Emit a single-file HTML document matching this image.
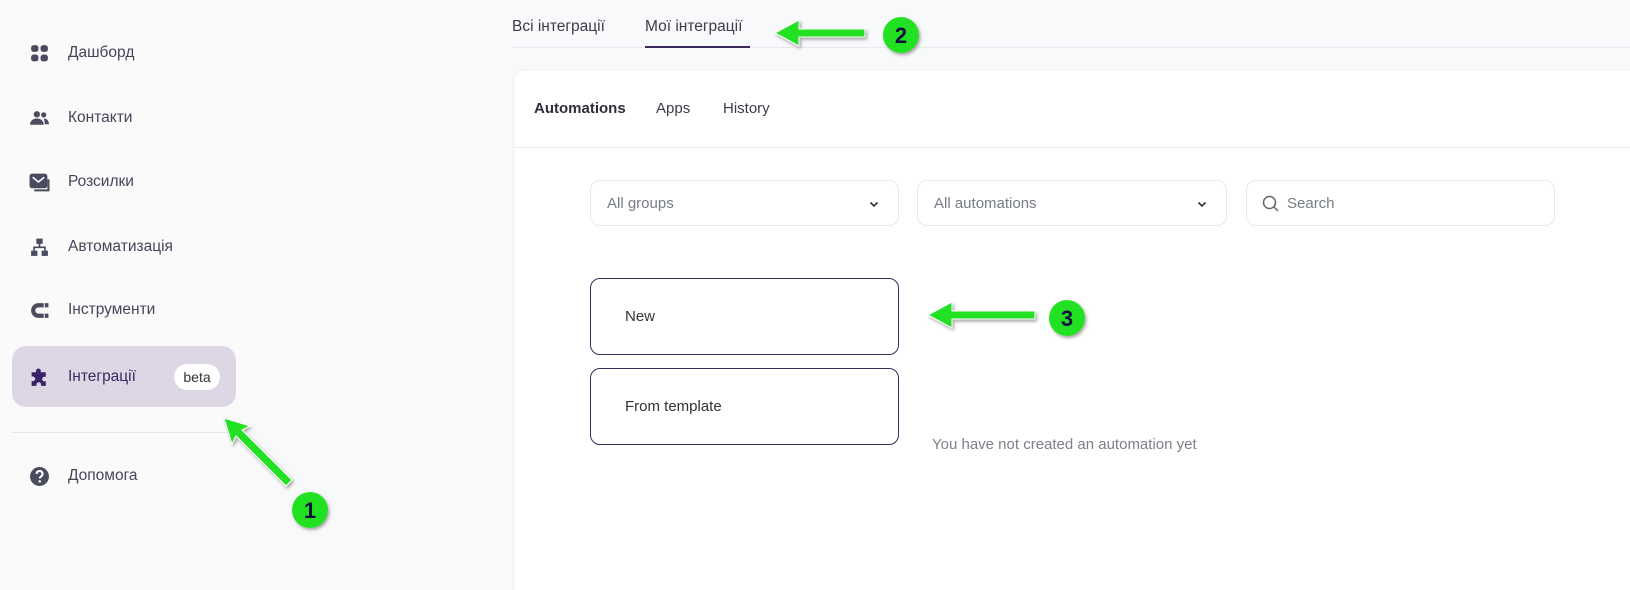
<!DOCTYPE html>
<html><head><meta charset="utf-8"><style>
*{margin:0;padding:0;box-sizing:border-box}
html,body{width:1630px;height:590px;overflow:hidden}
body{background:#f8f9fb;font-family:"Liberation Sans",sans-serif;position:relative;color:#3d3d4e}
.sb{position:absolute;left:0;top:0;width:252px;height:590px;background:#fafafa}
.it{position:absolute;left:0;width:252px;height:30px;display:flex;align-items:center;font-size:15.5px;color:#44455a}
.it svg{position:absolute;left:29px;width:21px;height:21px}
.it span{position:absolute;left:68px}
.hl{position:absolute;left:12px;top:346px;width:224px;height:61px;background:#ddd6e4;border-radius:14px}
.beta{position:absolute;left:174px;top:364px;width:46px;height:26px;background:#fff;border-radius:13px;font-size:14px;text-align:center;line-height:26px;color:#333}
.div{position:absolute;left:12px;top:432px;width:224px;height:1px;background:#e6e6ea}
.t{position:absolute;font-size:15.5px;color:#3b3b4a}
.card{position:absolute;left:513px;top:69px;width:1117px;height:521px;background:#fff;border:1px solid #eceef2;border-bottom:none;border-right:none;border-radius:12px 0 0 0}
.hdr{position:absolute;left:513px;top:147px;width:1117px;height:1px;background:#eceef2}
.dd{position:absolute;top:180px;height:46px;border:1px solid #e6e8ec;border-radius:10px;background:#fff;font-size:15px;color:#777b84}
.dd span{position:absolute;left:16px;top:14px}
.btn{position:absolute;left:590px;width:309px;height:77px;border:1.3px solid #3c2a5c;border-radius:10px;background:#fff;font-size:15px;color:#333}
.btn span{position:absolute;left:34px;top:29px}
</style></head><body>
<div class="sb"></div>
<div class="hl"></div>
<div class="it" style="top:38px"><svg viewBox="0 0 20 20" fill="#4a4b5e"><rect x="2" y="2" width="7" height="6.5" rx="2.5"/><rect x="11" y="2" width="7" height="6.5" rx="2.5"/><rect x="2" y="11" width="7" height="6.5" rx="2.5"/><rect x="11" y="11" width="7" height="6.5" rx="2.5"/></svg><span>Дашборд</span></div>
<div class="it" style="top:103px"><svg viewBox="0 0 20 20" fill="#4a4b5e"><circle cx="7.5" cy="6" r="3"/><circle cx="14" cy="6.5" r="2.5"/><path d="M1 16c0-4 3-6 6.5-6s6.5 2 6.5 6z"/><path d="M14 10c3 0 5 2 5 5.5h-4c0-2-.5-4-1-5.5z"/></svg><span>Контакти</span></div>
<div class="it" style="top:167px"><svg viewBox="0 0 20 20" fill="none" stroke="#4a4b5e" stroke-width="2"><rect x="1.5" y="2.5" width="15" height="12" rx="1.5" fill="#4a4b5e"/><path d="M3.5 5l5.5 4.5 5.5-4.5" stroke="#fff" stroke-width="1.6"/><path d="M18.5 7v10.5H5"/></svg><span>Розсилки</span></div>
<div class="it" style="top:232px"><svg viewBox="0 0 20 20" fill="#4a4b5e"><rect x="7" y="1.5" width="6" height="5"/><rect x="2" y="13" width="6" height="5"/><rect x="12" y="13" width="6" height="5"/><path d="M9.2 6h1.6v3H16v4h-1.6v-2.4H5.6V13H4V9h5.2z"/></svg><span>Автоматизація</span></div>
<div class="it" style="top:295px"><svg viewBox="0 0 20 20" fill="#4a4b5e"><path d="M14 3H9a7 7 0 000 14h5v-4H9a3 3 0 010-6h5z"/><rect x="15" y="3" width="3.5" height="4"/><rect x="15" y="13" width="3.5" height="4"/></svg><span>Інструменти</span></div>
<div class="it" style="top:362px;color:#3b2a60"><svg viewBox="0 0 20 20" fill="#3b2266"><path d="M7 2.5a2.3 2.3 0 014.2 1.2V5H16v4.3h-1.3a2.2 2.2 0 100 4.4H16V18h-4.5v-1.3a2.2 2.2 0 10-4.4 0V18H2.5v-4.5h1.2a2.2 2.2 0 100-4.4H2.5V5h4.2V3.7c0-.4.1-.8.3-1.2z"/></svg><span>Інтеграції</span></div>
<div class="beta">beta</div>
<div class="div"></div>
<div class="it" style="top:461px"><svg viewBox="0 0 20 20"><circle cx="10" cy="10" r="9" fill="#4a4b5e"/><path d="M7.3 7.6a2.8 2.8 0 115 1.6c-.8.8-2 1.2-2 2.6" stroke="#fff" stroke-width="2" fill="none"/><circle cx="10.2" cy="14.6" r="1.2" fill="#fff"/></svg><span>Допомога</span></div>

<div style="position:absolute;left:512px;top:47px;width:1118px;height:1px;background:#e8eaee"></div>
<div class="t" style="left:512px;top:18px">Всі інтеграції</div>
<div class="t" style="left:645px;top:18px">Мої інтеграції</div>
<div style="position:absolute;left:645px;top:46px;width:105px;height:2px;background:#3c2a5c"></div>

<div class="card"></div>
<div class="hdr"></div>
<div class="t" style="left:534px;top:100px;font-weight:bold;font-size:15px;color:#2e2e3a">Automations</div>
<div class="t" style="left:656px;top:100px;font-size:15px">Apps</div>
<div class="t" style="left:723px;top:100px;font-size:15px">History</div>

<div class="dd" style="left:590px;width:309px"><span>All groups</span><svg style="position:absolute;left:278px;top:20px" width="10" height="7" viewBox="0 0 10 7"><path d="M1.5 1.5l3.5 3.5 3.5-3.5" stroke="#333" stroke-width="1.6" fill="none"/></svg></div>
<div class="dd" style="left:917px;width:310px"><span>All automations</span><svg style="position:absolute;left:279px;top:20px" width="10" height="7" viewBox="0 0 10 7"><path d="M1.5 1.5l3.5 3.5 3.5-3.5" stroke="#333" stroke-width="1.6" fill="none"/></svg></div>
<div class="dd" style="left:1246px;width:309px"><svg style="position:absolute;left:15px;top:14px" width="18" height="18" viewBox="0 0 18 18"><circle cx="7.5" cy="7.5" r="6" stroke="#666" stroke-width="1.5" fill="none"/><path d="M12 12l4 4" stroke="#666" stroke-width="1.5"/></svg><span style="left:40px">Search</span></div>

<div class="btn" style="top:278px"><span>New</span></div>
<div class="btn" style="top:368px"><span>From template</span></div>
<div class="t" style="left:932px;top:436px;font-size:15px;color:#7d8088">You have not created an automation yet</div>

<svg style="position:absolute;left:0;top:0" width="1630" height="590">
<defs><filter id="sh"><feDropShadow dx="1.5" dy="2" stdDeviation="1.5" flood-color="#000" flood-opacity=".35"/></filter></defs>
<g filter="url(#sh)" fill="#22e022" stroke="#fff" stroke-width="1">
<path d="M224 418l26 8-8 4 50 50-6 6-50-50-4 8z"/>
<path d="M775 33l24-13v9h66v8h-66v9z"/>
<path d="M928 315l24-13v9h83v8h-83v9z"/>
<circle cx="310" cy="510" r="18" stroke-width="0"/>
<circle cx="901" cy="35" r="18" stroke-width="0"/>
<circle cx="1067" cy="318" r="18" stroke-width="0"/>
</g>
<g font-family="Liberation Sans" font-weight="bold" font-size="22" fill="#101040" text-anchor="middle">
<text x="310" y="518">1</text><text x="901" y="43">2</text><text x="1067" y="326">3</text>
</g>
</svg>
</body></html>
